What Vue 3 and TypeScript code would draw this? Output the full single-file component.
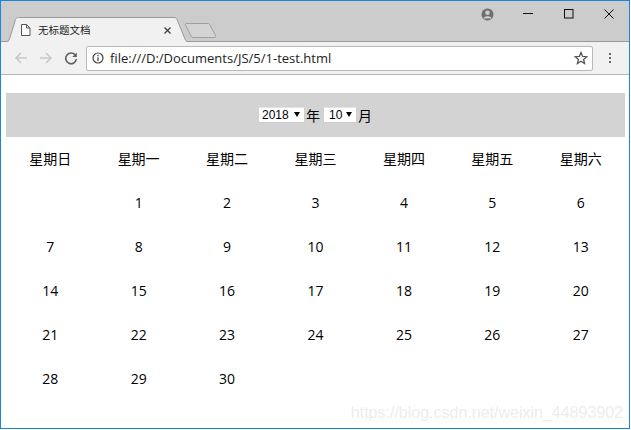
<script setup lang="ts">
const weekdays: string[] = ['星期日', '星期一', '星期二', '星期三', '星期四', '星期五', '星期六']
const days: (number | null)[] = [null, ...Array.from({ length: 30 }, (_, i) => i + 1)]
</script>

<template>
  <div class="window">
    <header class="titlebar">
      <svg class="tabs" width="240" height="41" viewBox="0 0 240 41">
        <path d="M-1 40.500H5C7 40.500 8 39.500 8.500 38L14.500 18.500C15 17 16 16.500 17.500 16.500H173C174.500 16.500 175.500 17 176 18.500L184 38C184.500 39.500 185.500 40.500 187.500 40.500H188" fill="#f1f1f1" stroke="#9a9a9a" />
        <rect x="8" y="40" width="177" height="1" fill="#f1f1f1" />
        <path d="M185.500 22.500H207C208 22.500 208.500 23 209 24L214.500 34.500C215 35.500 214.500 36.500 213.500 36.500H192C191 36.500 190.500 36 190 35L184.500 24C184 23 184.500 22.500 185.500 22.500Z" fill="#d4d4d4" stroke="#9f9f9f" />
        <path d="M20.500 23.500H25.500L29 27V34.500H20.500Z M25.500 23.500V27H29" fill="#fff" stroke="#555" />
        <path d="M163.500 26.500L169.500 32.500M169.500 26.500L163.500 32.500" fill="none" stroke="#444" stroke-width="1.400" />
      </svg>
      <span class="tab-title">无标题文档</span>
      <div class="controls">
        <svg class="ctl-user" width="13" height="13" viewBox="0 0 13 13">
          <circle cx="6.500" cy="6.500" r="6" fill="#6e6e6e" />
          <circle cx="6.500" cy="4.800" r="2.300" fill="#cccccc" />
          <path d="M2.500 10C3.500 7.800 9.500 7.800 10.500 10V10.500H2.500Z" fill="#cccccc" />
        </svg>
        <svg width="10" height="10" viewBox="0 0 10 10" class="ctl-min"><path d="M0 4.500H10" stroke="#111" /></svg>
        <svg width="10" height="10" viewBox="0 0 10 10" class="ctl-max"><rect x="0.500" y="0.500" width="8.500" height="8.500" fill="none" stroke="#111" /></svg>
        <svg width="10" height="10" viewBox="0 0 10 10" class="ctl-close"><path d="M0.500 0.500L9.500 9.500M9.500 0.500L0.500 9.500" stroke="#111" /></svg>
      </div>
    </header>

    <nav class="toolbar">
      <svg width="14" height="14" viewBox="0 0 14 14" class="nav"><path d="M13 7H2M7 2L2 7L7 12" fill="none" stroke="#c9c9c9" stroke-width="1.600" /></svg>
      <svg width="14" height="14" viewBox="0 0 14 14" class="nav"><path d="M1 7H12M7 2L12 7L7 12" fill="none" stroke="#c9c9c9" stroke-width="1.600" /></svg>
      <svg width="14" height="14" viewBox="0 0 14 14" class="nav"><path d="M11.500 4.500A5.300 5.300 0 1 0 12.300 8" fill="none" stroke="#5f5f5f" stroke-width="1.600" /><path d="M12.800 1.500V6H8.300Z" fill="#5f5f5f" /></svg>
      <div class="omnibox">
        <svg width="12" height="12" viewBox="0 0 12 12"><circle cx="6" cy="6" r="5" fill="none" stroke="#444" stroke-width="1.200" /><path d="M6 5.200V9M6 3V4.300" stroke="#444" stroke-width="1.300" /></svg>
        <span class="url">file:///D:/Documents/JS/5/1-test.html</span>
        <svg class="star" width="14" height="14" viewBox="0 0 14 14"><path d="M7 1.500L8.600 5.400L12.800 5.700L9.600 8.400L10.600 12.500L7 10.300L3.400 12.500L4.400 8.400L1.200 5.700L5.400 5.400Z" fill="none" stroke="#555" stroke-width="1.300" /></svg>
      </div>
      <div class="menu"><i></i><i></i><i></i></div>
    </nav>

    <main class="page">
      <div class="picker">
        <span class="sel-wrap year"><select class="sel"><option>2018</option></select></span>
        <span class="label">年</span>
        <span class="sel-wrap month"><select class="sel"><option>10</option></select></span>
        <span class="label">月</span>
      </div>
      <div class="grid">
        <div v-for="w in weekdays" :key="w" class="cell">{{ w }}</div>
        <div v-for="(d, i) in days" :key="i" class="cell">{{ d ?? '' }}</div>
      </div>
      <div class="watermark">https://blog.csdn.net/weixin_44893902</div>
    </main>
  </div>
</template>

<style>
html, body { margin: 0; background: #fff; }
</style>

<style scoped>
.window {
  position: relative;
  box-sizing: border-box;
  width: 630px;
  height: 429px;
  border: 1px solid #1a87d8;
  overflow: hidden;
  display: flex;
  flex-direction: column;
  font-family: "Open Sans", "Noto Sans CJK SC", sans-serif;
  color: #000;
}
.titlebar {
  position: relative;
  box-sizing: border-box;
  height: 41px;
  flex: none;
  background: #cccccc;
  border-bottom: 1px solid #9a9a9a;
}
.tabs { position: absolute; left: 0; top: 0; overflow: visible; }
.tab-title {
  position: absolute;
  left: 37px;
  top: 21px;
  font-family: "Noto Sans CJK SC", sans-serif;
  font-size: 10.500px;
  line-height: 16px;
  color: #222;
}
.controls svg { position: absolute; }
.ctl-user { left: 480px; top: 7px; }
.ctl-min { left: 522px; top: 8px; }
.ctl-max { left: 563px; top: 8px; }
.ctl-close { left: 603px; top: 8px; }
.toolbar {
  height: 33px;
  flex: none;
  box-sizing: border-box;
  background: #f1f1f1;
  border-bottom: 1px solid #b5b5b5;
  display: flex;
  align-items: center;
  padding: 0 14px 0 13px;
  gap: 11px;
}
.omnibox {
  width: 507px;
  flex: none;
  margin-left: -3px;
  height: 25px;
  box-sizing: border-box;
  background: #fff;
  border: 1px solid #b9b9b9;
  border-radius: 2px;
  display: flex;
  align-items: center;
  gap: 6px;
  padding: 0 4px 0 5px;
}
.url {
  flex: 1;
  font-size: 13px;
  color: #222;
  white-space: nowrap;
}
.menu { display: flex; flex-direction: column; gap: 2px; width: 8px; align-items: center; margin-left: 2px; }
.menu i { width: 2px; height: 2px; background: #666; }
.page {
  flex: 1;
  padding: 18px 4px 0 5px;
  background: #fff;
}
.picker {
  box-sizing: border-box;
  height: 44px;
  padding-right: 1px;
  background: #d3d3d3;
  display: flex;
  align-items: center;
  justify-content: center;
  font-size: 14px;
}
.label { font-family: "Noto Sans CJK SC", sans-serif; }
.sel-wrap {
  position: relative;
  display: block;
  height: 16px;
}
.sel-wrap::after {
  content: "";
  position: absolute;
  right: 5px;
  top: 5px;
  border-left: 3px solid transparent;
  border-right: 3px solid transparent;
  border-top: 5px solid #000;
  pointer-events: none;
}
.sel {
  display: block;
  appearance: none;
  box-sizing: border-box;
  width: 100%;
  height: 16px;
  font-family: "Liberation Sans", sans-serif;
  font-size: 12px;
  line-height: 14px;
  background: #fff;
  color: #000;
  border: 1px solid #cfcfcf;
  border-top-color: #e4e4e4;
  border-radius: 0;
  padding: 0 0 0 3px;
  margin: 0;
}
.year { width: 47px; margin-right: 1px; }
.month { width: 34px; margin: 0 1px 0 3px; }
.month .sel { padding-left: 5px; }
.grid {
  display: grid;
  grid-template-columns: repeat(7, 1fr);
  grid-auto-rows: 44px;
}
.cell {
  box-sizing: border-box;
  padding-bottom: 2px;
  display: flex;
  align-items: center;
  justify-content: center;
  font-size: 14px;
  color: #000;
}
.watermark {
  position: absolute;
  right: 6px;
  bottom: 6px;
  font-family: "Liberation Sans", sans-serif;
  font-size: 16px;
  color: #ededed;
}
</style>
